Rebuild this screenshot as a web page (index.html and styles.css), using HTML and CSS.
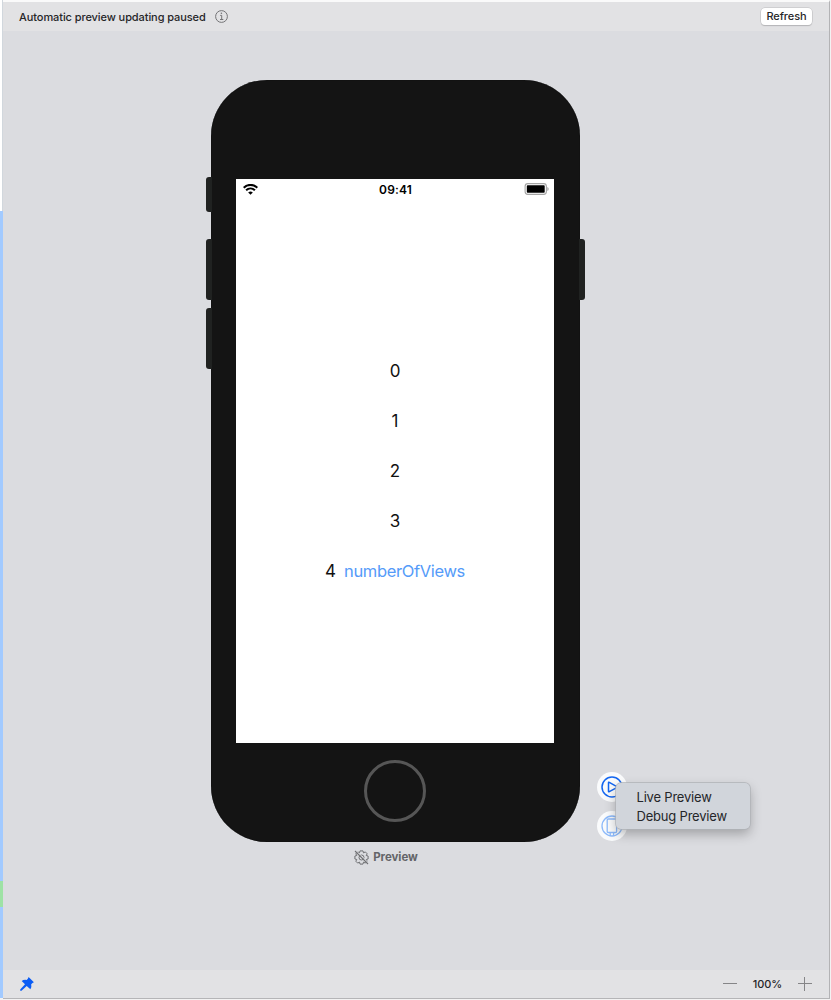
FILE: index.html
```html
<!DOCTYPE html>
<html lang="en">
<head>
<meta charset="utf-8">
<title>Preview</title>
<link rel="stylesheet" href="styles.css">
</head>
<body>
<div class="window">
  <div class="gutter"><span class="gutter-blank"></span><span class="gutter-blue"></span><span class="gutter-green"></span><span class="gutter-blue-end"></span></div>
  <main class="pane">
    <header class="topbar">
      <span class="status">Automatic preview updating paused</span>
      <svg class="info" width="13" height="13" viewBox="0 0 13 13" fill="none" stroke="#747476"><circle cx="6.5" cy="6.5" r="5.9"/><path d="M5.2 5.4h1.5v4M5 9.5h3.3"/><circle cx="6.4" cy="3.3" r=".8" fill="#747476" stroke="none"/></svg>
      <button class="refresh">Refresh</button>
    </header>
    <section class="canvas">
      <div class="device">
        <div class="phone">
          <i class="key mute"></i><i class="key up"></i><i class="key down"></i><i class="key power"></i>
          <div class="screen">
            <div class="statusbar">
              <svg width="15" height="11" viewBox="0 0 15 11" fill="none" stroke="#000" stroke-width="2.1"><path d="M.7 3.700C4.500 0 10.500 0 14.300 3.700M3.100 6.200C5.600 3.900 9.400 3.900 11.900 6.200"/><path d="M5.200 8.400Q7.500 6.500 9.800 8.400L7.500 10.800Z" fill="#000" stroke="none"/></svg>
              <span class="time">09:41</span>
              <svg width="25" height="12" viewBox="0 0 25 12"><rect x="1.100" y=".6" width="21.300" height="10.800" rx="2.800" fill="#fff" stroke="#a5a5a5" stroke-width="1.100"/><rect x="2.800" y="2.200" width="17.900" height="7.600" rx=".8"/><path d="M23.300 4v4q1.400-.6 1.400-2t-1.400-2" fill="#a5a5a5"/></svg>
            </div>
            <div class="rows">
              <div class="row">0</div><div class="row">1</div><div class="row">2</div><div class="row">3</div>
              <div class="row"><span>4</span><a class="link">numberOfViews</a></div>
            </div>
          </div>
          <div class="home"></div>
        </div>
        <div class="caption">
          <svg width="15" height="15" viewBox="0 0 15 15" fill="none" stroke="#6f7073" stroke-width="1" stroke-linejoin="round"><path d="M6 .9h3l.5 2 1.800-1 1.900 1.900-1 1.700 1.900.5v3l-1.900.5 1 1.700-1.900 1.900-1.800-1-.5 2H6l-.5-2-1.800 1-1.900-1.900 1-1.700L.9 9V6l1.900-.5-1-1.700 1.900-1.900 1.800 1z"/><circle cx="7.500" cy="7.500" r="2.500"/><path d="M2.200.8l12 12" stroke="#dbdce0" stroke-width="1"/><path d="M1 1l13 13" stroke-width="1.100"/></svg>
          <span>Preview</span>
        </div>
      </div>
      <div class="actions">
        <div class="action"><svg width="22" height="22" viewBox="0 0 22 22" fill="none" stroke="#1366f0" stroke-width="1.500"><circle cx="11" cy="11" r="10"/><path d="M7.500 6.800v8.400q0 .9.800.5l7.500-4.100q.8-.5 0-1L8.300 6.300q-.8-.4-.8.500z"/></svg></div>
        <div class="action"><svg width="22" height="22" viewBox="0 0 22 22" fill="none" stroke="#8dbafa" stroke-width="1.300"><circle cx="11" cy="11" r="10"/><rect x="6.200" y="4" width="9.400" height="13.500" rx="1"/><path d="M9.200 17.500V21M12.600 17.500V21"/></svg></div>
        <div class="menu"><div class="item">Live Preview</div><div class="item debug">Debug Preview</div></div>
      </div>
    </section>
    <footer class="bottombar">
      <svg class="pin" width="14" height="14" viewBox="0 0 14 14" fill="#0a5cf5"><path d="M8.600 0L13.900 5.300 12.500 6 11.200 7.300Q11.900 10.200 10.400 12.200L6.700 8.900 1.500 13.800.2 13.700.2 12.500 5 7.200 1.700 3.900Q3.600 2.400 6.700 2.900L8 1.500Z"/></svg>
      <svg class="minus" width="14" height="14" viewBox="0 0 14 14" stroke="#858587"><path d="M0 6.500h14"/></svg>
      <span class="zoom">100%</span>
      <svg width="14" height="14" viewBox="0 0 14 14" stroke="#858587"><path d="M0 6.500h14M6.500 0v14"/></svg>
    </footer>
  </main>
</div>
</body>
</html>
```
FILE: styles.css
```css
* { box-sizing: border-box; }
body { margin: 0; font-family: Inter, sans-serif; color: #262628; }
.window { display: flex; width: 831px; height: 1000px; overflow: hidden; background: #f2f2f2; }
.gutter { width: 3px; display: flex; flex-direction: column; }
.gutter-blank { height: 211px; background: #fff; border-right: 1px solid #d1d7dd; }
.gutter-blue { height: 670px; background: #a2caff; }
.gutter-green { height: 26px; background: #9ee2a5; }
.gutter-blue-end { height: 91px; background: #a2caff; }
.pane { width: 827px; height: 999px; display: flex; flex-direction: column; border-top: 2px solid #fafafa; border-bottom: 1px solid #b5b5b7; border-right: 1px solid #b3b3b5; }
.topbar { height: 29px; display: flex; align-items: center; padding: 0 17px 0 16px; background: #e2e2e4; }
.status { font-size: 11px; font-weight: 500; letter-spacing: -.08px; white-space: nowrap; }
.info { margin-left: 9px; }
.refresh { width: 51px; height: 17px; margin-left: auto; padding: 0; border: 0; border-radius: 4px; background: #fff; box-shadow: 0 0 0 .5px #bcbcbe, 0 1px 1px #b1b1b3; font: 500 11px/17px Inter, sans-serif; letter-spacing: -.08px; color: #262628; }
.canvas { flex: 1; display: flex; padding: 49px 0 0 208px; background: #dbdce0; }
.device { width: 369px; flex: none; }
.phone { position: relative; height: 762px; padding: 99px 26px 0 25px; background: #141414; border-radius: 56px; box-shadow: inset 0 0 1px #000; }
.key { position: absolute; width: 6px; background: #202221; }
.mute, .up, .down { left: -5px; border-radius: 3px 0 0 3px; }
.mute { top: 97px; height: 35px; }
.up { top: 159px; height: 61px; }
.down { top: 228px; height: 61px; }
.power { right: -5px; top: 159px; height: 61px; border-radius: 0 3px 3px 0; }
.screen { height: 564px; background: #fff; color: #111; }
.statusbar { height: 20px; display: flex; align-items: center; justify-content: space-between; padding: 0 5px 0 7px; }
.time { font-size: 12px; font-weight: 600; letter-spacing: .15px; color: #000; margin-left: 9px; }
.rows { padding-top: 147px; }
.row { height: 50.1px; display: flex; align-items: center; justify-content: center; gap: 8px; padding-bottom: 1px; font-size: 17px; line-height: 22px; }
.link { color: #559bf9; font-size: 16.5px; letter-spacing: -.36px; }
.home { width: 62px; height: 62px; margin: 17px auto 0; border: 3px solid #565656; border-radius: 50%; }
.caption { height: 30px; display: flex; align-items: center; justify-content: center; gap: 4px; padding-right: 19px; font-size: 11.5px; font-weight: 700; letter-spacing: -.05px; color: #646568; }
.actions { position: relative; width: 160px; padding: 692px 0 0 16.500px; display: flex; flex-direction: column; gap: 9px; }
.action { width: 30px; height: 30px; padding: 4px; border-radius: 50%; background: #fafbfc; }
.action svg { display: block; }
.menu { position: absolute; left: 35.500px; top: 703px; width: 134px; height: 46px; padding: 5px 21px; border-radius: 5px; background: #d1d5db; box-shadow: 0 0 0 .7px #afb2b7, 0 5px 12px rgba(0,0,0,.27); color: #252629; }
.item { height: 19px; font-size: 13px; line-height: 19px; letter-spacing: -.2px; white-space: nowrap; }
.bottombar { height: 28px; display: flex; align-items: center; padding: 0 17px 0 17px; background: #e2e2e4; }
.minus { margin-left: auto; }
.zoom { width: 61px; text-align: center; font-size: 11px; font-weight: 500; letter-spacing: -.1px; }
```
